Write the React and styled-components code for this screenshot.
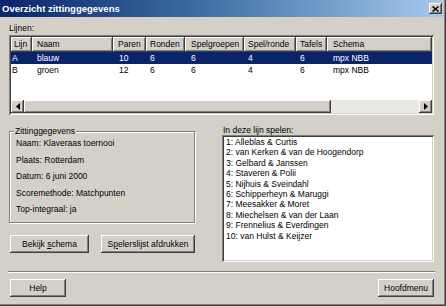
import React from 'react';
import styled, { createGlobalStyle, css } from 'styled-components';

const Global = createGlobalStyle`
  html, body { margin: 0; padding: 0; background: #D4D0C8; }
  body { font-family: "Liberation Sans", Arial, sans-serif; font-size: 8.5px; color: #000; }
  * { box-sizing: border-box; }
`;

const raised = css`
  background: #D4D0C8;
  box-shadow: inset -1px -1px 0 #404040, inset 1px 1px 0 #FFFFFF,
    inset -2px -2px 0 #808080, inset 2px 2px 0 #D4D0C8;
`;

const sunken = css`
  box-shadow: inset 1px 1px 0 #808080, inset -1px -1px 0 #FFFFFF,
    inset 2px 2px 0 #404040, inset -2px -2px 0 #D4D0C8;
`;

const Window = styled.div`
  width: 446px;
  height: 306px;
  display: flex;
  flex-direction: column;
  background: #D4D0C8;
  padding: 0 3px 2px 0;
  box-shadow: inset -1px -1px 0 #404040, inset -2px -2px 0 #808080;
`;

const TitleBar = styled.div`
  height: 17px;
  flex: none;
  display: flex;
  align-items: center;
  justify-content: space-between;
  padding: 0 1px 0 2px;
  background: linear-gradient(to right, #0A246A 0%, #3A6EA5 45%, #A6CAF0 100%);
`;

const TitleText = styled.span`
  color: #fff;
  font-weight: bold;
  font-size: 9.5px;
  white-space: nowrap;
`;

const CloseButton = styled.div`
  ${raised};
  width: 13px;
  height: 11px;
  display: flex;
  align-items: center;
  justify-content: center;
`;

const Body = styled.div`
  flex: 1;
  display: flex;
  flex-direction: column;
  padding: 0 9px;
`;

const Label = styled.div`
  line-height: ${(p) => p.$lh || 11}px;
  height: ${(p) => p.$lh || 11}px;
  margin-top: ${(p) => p.$mt || 0}px;
  padding-left: ${(p) => p.$pl || 0}px;
  white-space: nowrap;
`;

const ListFrame = styled.div`
  ${sunken};
  margin-top: 1px;
  height: 80px;
  padding: 2px;
  background: #fff;
  display: flex;
  flex-direction: column;
`;

const HeaderRow = styled.div`
  display: flex;
  height: 15px;
  flex: none;
`;

const HeaderCell = styled.div`
  ${raised};
  box-shadow: inset -1px -1px 0 #404040, inset 1px 1px 0 #FFFFFF, inset -2px -2px 0 #808080;
  width: ${(p) => p.$w}px;
  flex: none;
  padding-left: ${(p) => p.$pl}px;
  line-height: 15px;
  white-space: nowrap;
  overflow: hidden;
`;

const DataRow = styled.div`
  display: flex;
  height: 12px;
  flex: none;
  background: ${(p) => (p.$selected ? '#0A246A' : '#fff')};
  color: ${(p) => (p.$selected ? '#fff' : '#000')};
`;

const DataCell = styled.div`
  width: ${(p) => p.$w}px;
  flex: none;
  padding-left: ${(p) => p.$pl}px;
  line-height: 12px;
  white-space: nowrap;
  overflow: hidden;
`;

const Spacer = styled.div`
  flex: 1;
`;

const ScrollBar = styled.div`
  height: 13px;
  flex: none;
  display: flex;
  background: #EAE8E3;
`;

const ScrollButton = styled.div`
  ${raised};
  width: ${(p) => p.$w || 13}px;
  flex: none;
  display: flex;
  align-items: center;
  justify-content: center;
`;

const Thumb = styled.div`
  ${raised};
  flex: none;
`;

const Bottom = styled.div`
  display: grid;
  grid-template-columns: 186px 212px;
  column-gap: 27px;
  margin-top: 11px;
`;

const Column = styled.div`
  display: flex;
  flex-direction: column;
`;

const GroupBox = styled.div`
  position: relative;
  margin-top: 5px;
  height: 92px;
  border: 1px solid #808080;
  box-shadow: inset 1px 1px 0 #fff, 1px 1px 0 #fff;
  padding: 6px 0 0 6px;
  display: flex;
  flex-direction: column;
  gap: 6.6px;
`;

const GroupCaption = styled.span`
  position: absolute;
  top: -6px;
  left: 4px;
  padding: 0 1px;
  line-height: 10px;
  background: #D4D0C8;
  white-space: nowrap;
`;

const InfoLine = styled.div`
  line-height: 10px;
  white-space: nowrap;
`;

const ButtonRow = styled.div`
  display: flex;
  gap: 12px;
  margin-top: 12px;
  padding-left: 1px;
`;

const Button = styled.button`
  ${raised};
  width: ${(p) => p.$w}px;
  height: 18px;
  border: none;
  padding: 0;
  margin: 0;
  font-family: "Liberation Sans", Arial, sans-serif;
  font-size: 8.5px;
  color: #000;
  white-space: nowrap;
`;

const ListBox = styled.div`
  ${sunken};
  height: 127px;
  padding: 2px 2px 2px 4px;
  background: #fff;
`;

const ListItem = styled.div`
  line-height: 10.4px;
  height: 10.4px;
  white-space: nowrap;
`;

const Separator = styled.div`
  margin: 9px -1px 0;
  height: 2px;
  border-top: 1px solid #808080;
  border-bottom: 1px solid #fff;
`;

const Footer = styled.div`
  display: flex;
  justify-content: space-between;
  margin-top: 6px;
  padding-left: 1px;
`;

const columns = [
  { title: 'Lijn', w: 21, pl: 3, rpl: 1 },
  { title: 'Naam', w: 81, pl: 5, rpl: 5 },
  { title: 'Paren', w: 33, pl: 5, rpl: 6 },
  { title: 'Ronden', w: 39, pl: 4, rpl: 4 },
  { title: 'Spelgroepen', w: 59, pl: 6, rpl: 6 },
  { title: 'Spel/ronde', w: 52, pl: 4, rpl: 4 },
  { title: 'Tafels', w: 31, pl: 4, rpl: 4 },
  { title: 'Schema', w: 105, pl: 6, rpl: 6 },
];

const rows = [
  ['A', 'blauw', '10', '6', '6', '4', '6', 'mpx NBB'],
  ['B', 'groen', '12', '6', '6', '4', '6', 'mpx NBB'],
];

const players = [
  '1: Alleblas & Curtis',
  '2: van Kerken & van de Hoogendorp',
  '3: Gelbard & Janssen',
  '4: Staveren & Polii',
  '5: Nijhuis & Sveindahl',
  '6: Schipperheyn & Maruggi',
  '7: Meesakker & Moret',
  '8: Miechelsen & van der Laan',
  '9: Frennelius & Everdingen',
  '10: van Hulst & Keijzer',
];

const Arrow = ({ dir }) => (
  <svg width="4" height="7" viewBox="0 0 4 7">
    {dir === 'left' ? (
      <path d="M0 3.5 L4 0 L4 7 Z" fill="#000" />
    ) : (
      <path d="M4 3.5 L0 0 L0 7 Z" fill="#000" />
    )}
  </svg>
);

export default function App() {
  return (
    <>
      <Global />
      <Window>
        <TitleBar>
          <TitleText>Overzicht zittinggegevens</TitleText>
          <CloseButton>
            <svg width="7" height="6" viewBox="0 0 7 6">
              <path d="M0.5 0.5 L6.5 5.5 M6.5 0.5 L0.5 5.5" stroke="#000" strokeWidth="1.5" />
            </svg>
          </CloseButton>
        </TitleBar>
        <Body>
          <Label $mt={6}>Lijnen:</Label>
          <ListFrame>
            <HeaderRow>
              {columns.map((c) => (
                <HeaderCell key={c.title} $w={c.w} $pl={c.pl}>
                  {c.title}
                </HeaderCell>
              ))}
            </HeaderRow>
            {rows.map((r, i) => (
              <DataRow key={r[0]} $selected={i === 0}>
                {r.map((v, j) => (
                  <DataCell key={j} $w={columns[j].w} $pl={columns[j].rpl}>
                    {v}
                  </DataCell>
                ))}
              </DataRow>
            ))}
            <Spacer />
            <ScrollBar>
              <ScrollButton>
                <Arrow dir="left" />
              </ScrollButton>
              <Thumb style={{ width: 307 }} />
              <Spacer />
              <ScrollButton>
                <Arrow dir="right" />
              </ScrollButton>
            </ScrollBar>
          </ListFrame>
          <Bottom>
            <Column>
              <GroupBox>
                <GroupCaption>Zittinggegevens</GroupCaption>
                <InfoLine>Naam: Klaveraas toernooi</InfoLine>
                <InfoLine>Plaats: Rotterdam</InfoLine>
                <InfoLine>Datum: 6 juni 2000</InfoLine>
                <InfoLine>Scoremethode: Matchpunten</InfoLine>
                <InfoLine>Top-integraal: ja</InfoLine>
              </GroupBox>
              <ButtonRow>
                <Button $w={79}>
                  Bekijk <u>s</u>chema
                </Button>
                <Button $w={94}>
                  S<u>p</u>elerslijst afdrukken
                </Button>
              </ButtonRow>
            </Column>
            <Column>
              <Label $lh={9} $pl={1}>In deze lijn spelen:</Label>
              <ListBox>
                {players.map((p) => (
                  <ListItem key={p}>{p}</ListItem>
                ))}
              </ListBox>
            </Column>
          </Bottom>
          <Separator />
          <Footer>
            <Button $w={56}>Help</Button>
            <Button $w={56}>Hoofdmenu</Button>
          </Footer>
        </Body>
      </Window>
    </>
  );
}
